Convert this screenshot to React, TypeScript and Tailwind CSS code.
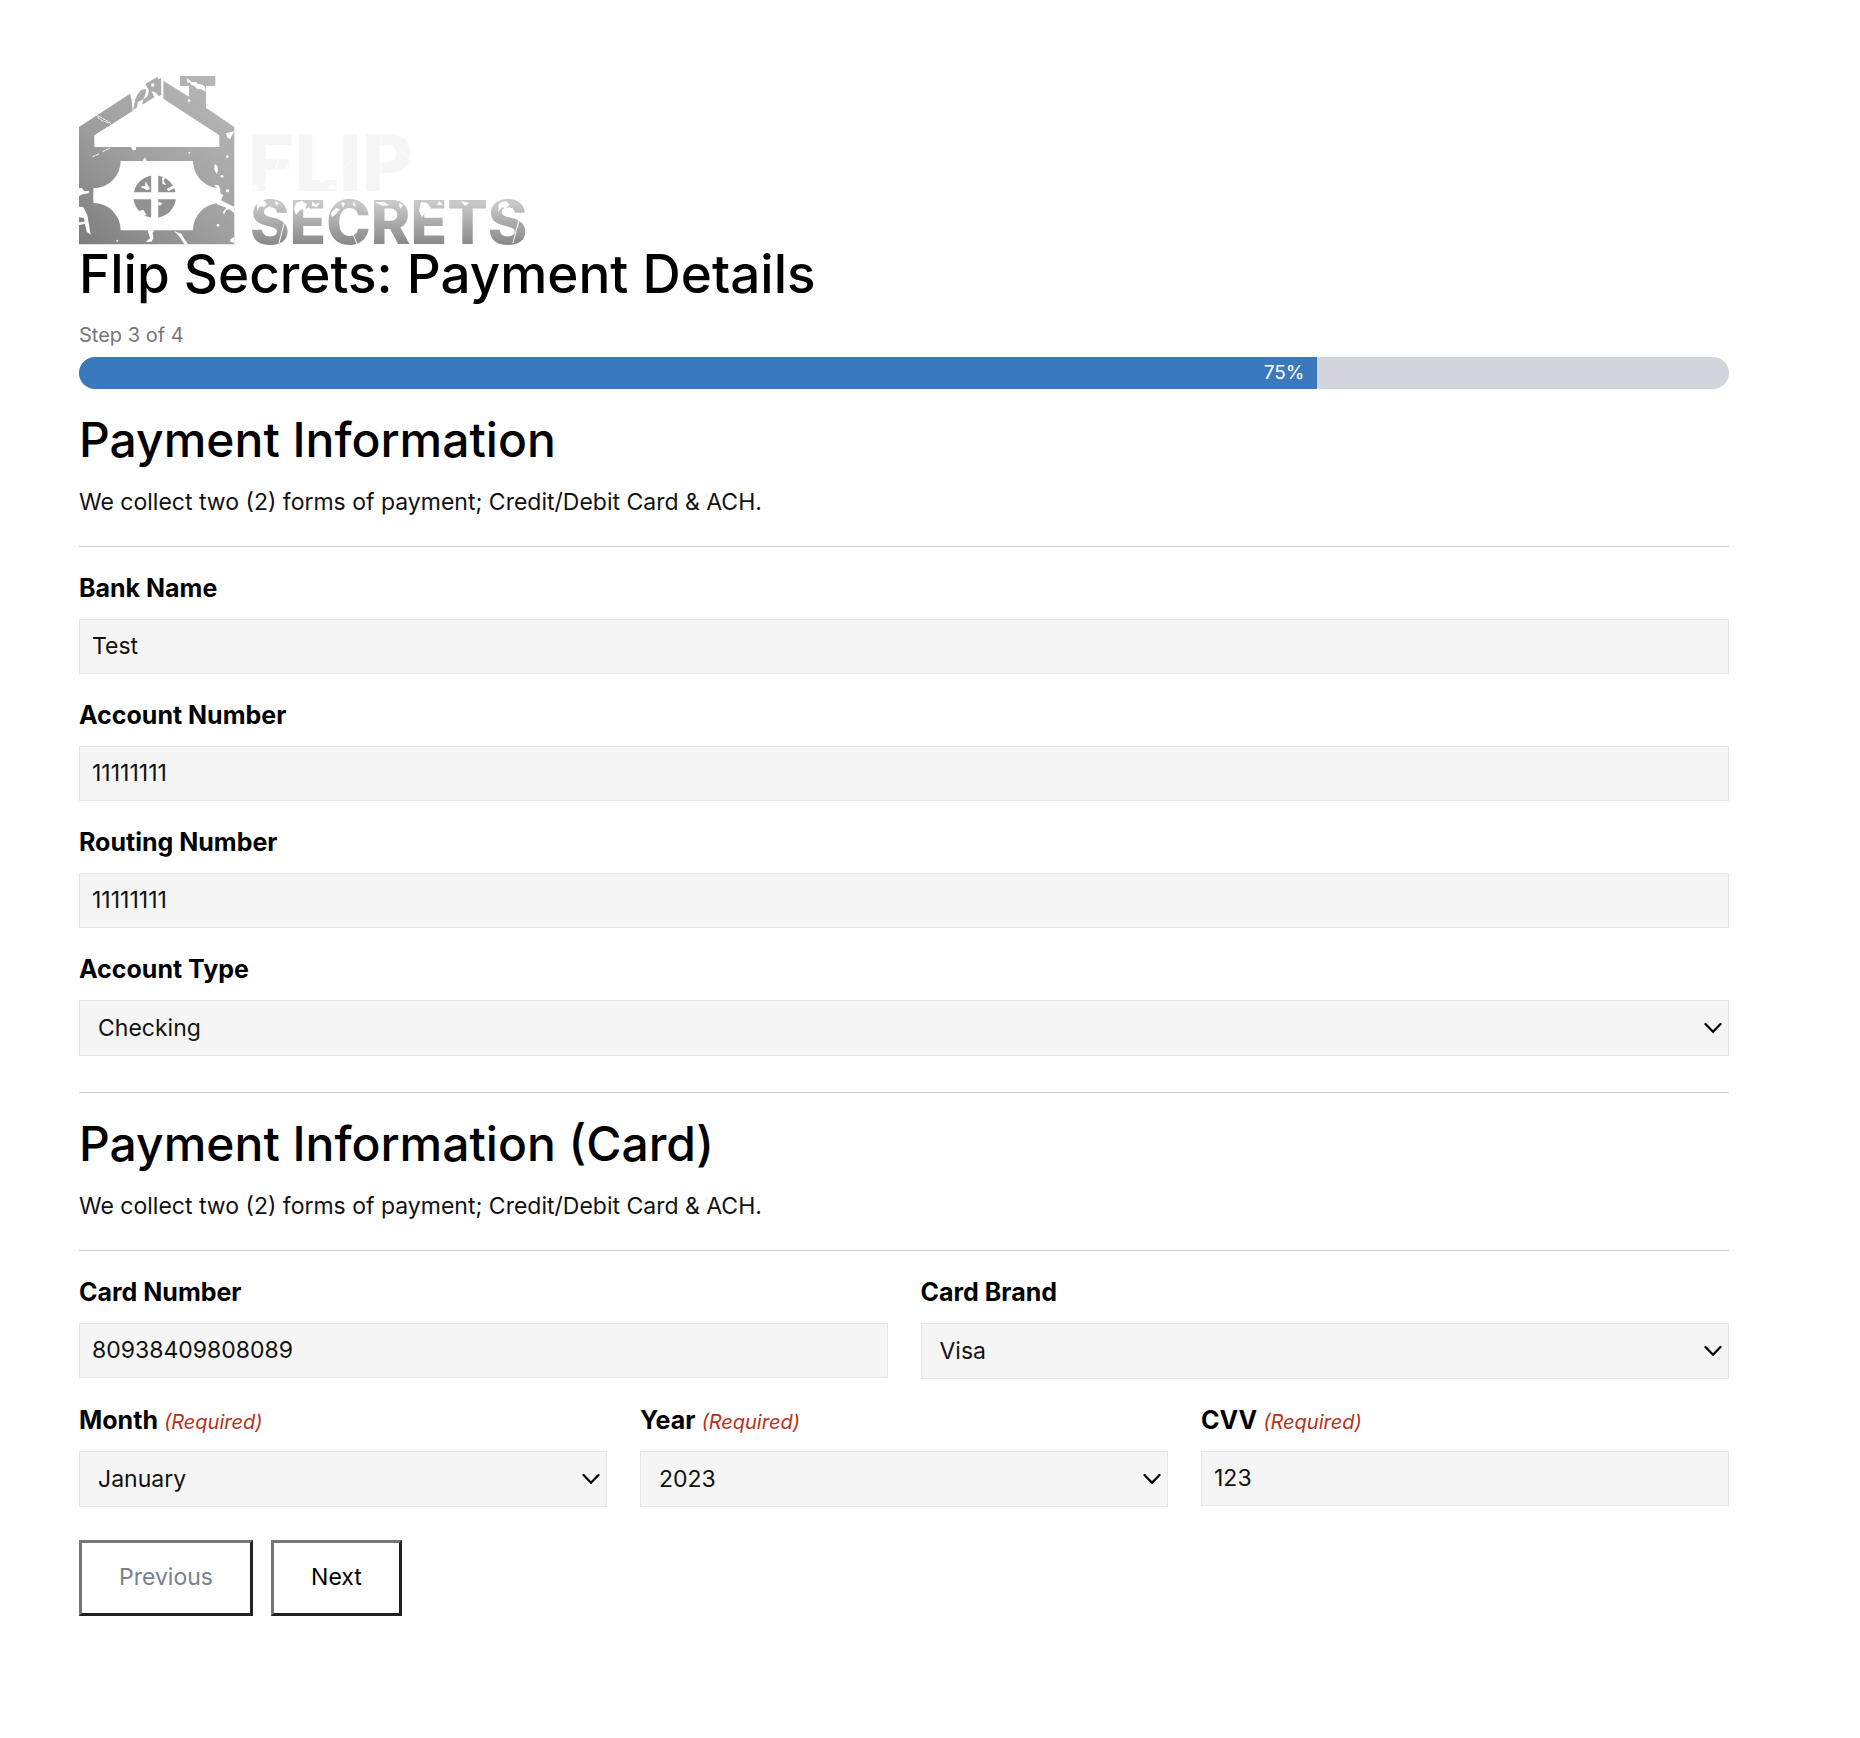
import { useId, type ReactNode } from "react";

function Logo() {
  return (
    <svg viewBox="0 0 456 169" className="block h-[169px] w-[456px] overflow-visible" role="img" aria-label="Flip Secrets">
      <defs>
        <linearGradient id="house" x1="0" y1="1" x2="0.8" y2="0">
          <stop offset="0" stopColor="#7d7d7d" />
          <stop offset="0.5" stopColor="#a0a0a0" />
          <stop offset="1" stopColor="#b6b6b6" />
        </linearGradient>
        <linearGradient id="word" x1="0" y1="0" x2="0" y2="1">
          <stop offset="0.25" stopColor="#c8c8c8" />
          <stop offset="0.8" stopColor="#8a8a8a" />
        </linearGradient>
      </defs>
      <g transform="translate(-19 -16) scale(0.33333)">
        <path
          fill="url(#house)"
          fillRule="evenodd"
          d="M57 201 L210 101 L215 120 L218 153 L103 226 V261 H478 V226 L310 116 V62 L387 110 V78 H360 V48 H466 V78 H438 V143 L523 201 V553 H57Z
             M182 303 A82 82 0 0 1 100 385 V429 A82 82 0 0 1 182 511 H399 A82 82 0 0 1 481 429 V385 A82 82 0 0 1 399 303Z"
        />
        <path
          fill="#acacac"
          d="M232 104L243 90L258 87L257 101L250 118L234 126L230 144L219 150L226 118Z M256 72L293 50L294 58L303 54L304 105L296 108L286 97L275 94L283 112L247 134L249 120L262 109L267 92Z"
        />
        <circle cx="284" cy="410" r="64" fill="#929292" />
        <path d="M284 340V480M215 407.500H355" stroke="#fff" strokeWidth="21" fill="none" />
        <g fill="#fff">
          <path d="M380 55L392 62L395 67L408 65L413 72L428 74L436 82L437 96L424 88L410 86L404 78L394 75L389 67L383 70Z" />
          <path d="M497 220L523 214L510 238L502 232Z" />
          <path d="M57 385L66 384L73 394L87 393L86 400L71 402L57 408Z" />
          <path d="M57 440L70 442L82 465L92 524L80 515L75 492L57 495V487L74 485L72 474L57 472Z" />
          <path d="M263 511H283L278 519L280 536L274 545L257 546L270 535Z" />
          <path d="M342 513L365 522L373 537L385 553H373L360 532Z" />
          <path d="M480 400L490 405L483 421L503 431L523 440V460L508 448L498 450L492 464L489 456L499 443L470 433Z" />
          <path d="M464 312L472 318L474 333L469 342L463 328Z" />
          <path d="M250 299L255 292L260 303H248Z" />
          <path d="M213 260H228V269L218 271Z" />
          <path d="M257 364L270 386L262 391L240 380L255 378Z" />
          <path d="M306 354L317 347L311 364L319 376L308 372Z" />
          <path d="M235 454L250 449L259 464L249 468Z" />
          <path d="M295 425L307 430L300 438L295 434Z" />
          <path d="M320 387L344 374L347 382L326 394Z" />
          <path d="M510 538L523 531V548L511 545Z" />
          <path d="M463 374L476 376L480 386L468 382Z" />
          <circle cx="278" cy="75" r="5" />
          <circle cx="387" cy="122" r="4" />
          <circle cx="388" cy="278" r="3" />
          <circle cx="502" cy="290" r="4" />
          <circle cx="474" cy="496" r="4" />
          <circle cx="486" cy="349" r="4" />
          <circle cx="503" cy="392" r="5" />
          <circle cx="172" cy="542" r="3" />
        </g>
        <path
          d="M108 166L122 171L131 177L142 183L153 191M113 172L128 183L146 188M98 290L119 281M128 275L150 264M480 430L523 452"
          stroke="#fff"
          strokeWidth="3"
          strokeDasharray="9 2"
          fill="none"
        />
      </g>
      <g fontFamily="Inter, sans-serif" fontWeight="800">
        <text x="169" y="115" fontSize="79" fill="#f6f6f6">FLIP</text>
        <text x="171" y="168" fontSize="60" fill="url(#word)">SECRETS</text>
      </g>
      <g fill="#fff">
        <path d="M178 127l6-3 4 4-3 3-4-1-3 5zM186 133l5-3 3 4-5 3zM196 125l4 2-3 3zM217 127l6-2 5 3-2 5-5 1-4 5-2-6zM226 134l4-3 2 6-4 2zM233 125l3 3 5-1-3 4-5-1zM252 137l5-5 4 1-4 5-4 3zM262 126l4 1-2 5zM275 125l2 6-3-2zM296 126h9l5 3-6 1-4-2zM320 127l4 2-3 4zM342 126l6 1 4 5-5 4-4 5-3-6zM352 134l4 2-2 4-4-1zM360 125l4 4h-6zM382 125l8 2-4 3zM398 138l5-1-2 4zM402 148l4 1-3 3zM397 157l3 2-3 2zM420 127l7-2 4 4-5 3-3-1-4 5zM430 133l4-1-1 5z" />
        <path d="M173 111l4-3 3 4-3 4zM185 106l3 3-4 1zM238 102l6-3 3 5-5 3zM249 110l5-2 3 4-5 2zM281 104l5 2-4 5zM312 74l4 3-3 3z" />
      </g>
      <path
        d="M203 70L197 92M211 82L204 107M252 106L272 84M302 62V114M320 73L338 90M200 167L206 144M434 167L440 144M278 168L274 158"
        stroke="#fff"
        strokeWidth="1"
        fill="none"
      />
    </svg>
  );
}

const control =
  "block w-full rounded-none border border-[#e6e6e6] bg-[#f5f5f5] text-[23px] text-[#111] outline-none";

function Label({ id, required, children }: { id: string; required?: boolean; children: ReactNode }) {
  return (
    <label htmlFor={id} className="mb-[13px] flex h-[35px] items-baseline gap-1.5 text-[25px] leading-[35px] font-bold text-black">
      {children}
      {required && <span className="text-[20px] leading-none font-normal text-[#b8301a] italic">(Required)</span>}
    </label>
  );
}

function TextField({ label, value, required }: { label: string; value: string; required?: boolean }) {
  const id = useId();
  return (
    <div>
      <Label id={id} required={required}>{label}</Label>
      <input id={id} type="text" defaultValue={value} className={`${control} h-[55px] px-3 pb-0.5`} />
    </div>
  );
}

function SelectField({ label, value, options, required }: { label: string; value: string; options: string[]; required?: boolean }) {
  const id = useId();
  return (
    <div>
      <Label id={id} required={required}>{label}</Label>
      <div className="relative">
        <select id={id} defaultValue={value} className={`${control} h-14 appearance-none pr-10 pl-[18px]`}>
          {options.map((o) => (
            <option key={o}>{o}</option>
          ))}
        </select>
        <svg
          viewBox="0 0 18 11"
          className="pointer-events-none absolute top-1/2 right-[7px] h-[11px] w-[18px] -translate-y-1/2"
          fill="none"
          stroke="#000"
          strokeWidth="2.300"
          strokeLinecap="round"
          strokeLinejoin="round"
          aria-hidden="true"
        >
          <path d="M1.500 1.500L9 9.300L16.500 1.500" />
        </svg>
      </div>
    </div>
  );
}

function SectionIntro({ title }: { title: string }) {
  return (
    <section className="pt-6">
      <h2 className="text-[48px] leading-[54px] font-medium text-black">{title}</h2>
      <p className="mt-[18px] text-[23px] leading-[34px] text-[#111]">
        We collect two (2) forms of payment; Credit/Debit Card &amp; ACH.
      </p>
      <hr className="mt-[27px] border-[#ccc]" />
    </section>
  );
}

export default function App() {
  return (
    <main className="min-h-screen bg-white pt-[76px] pr-[131px] pb-[122px] pl-[79px] font-['Inter',sans-serif]">
      <Logo />
      <h1 className="text-[53px] leading-[58px] font-medium text-black">Flip Secrets: Payment Details</h1>
      <p className="mt-[18px] text-[20px] leading-[28px] text-[#767676]">Step 3 of 4</p>
      <div
        role="progressbar"
        aria-valuenow={75}
        aria-valuemin={0}
        aria-valuemax={100}
        aria-label="Form progress"
        className="mt-2 h-8 overflow-hidden rounded-full bg-[#d2d6dc]"
      >
        <div className="flex h-full w-3/4 items-center justify-end bg-[#3b79be] pr-3 text-[19px] text-white">75%</div>
      </div>

      <form onSubmit={(e) => e.preventDefault()}>
        <SectionIntro title="Payment Information" />
        <div className="mt-6 flex flex-col gap-6">
          <TextField label="Bank Name" value="Test" />
          <TextField label="Account Number" value="11111111" />
          <TextField label="Routing Number" value="11111111" />
          <SelectField label="Account Type" value="Checking" options={["Checking", "Savings"]} />
        </div>
        <hr className="mt-9 border-[#ccc]" />

        <SectionIntro title="Payment Information (Card)" />
        <div className="mt-6 grid grid-cols-2 gap-x-[33px]">
          <TextField label="Card Number" value="80938409808089" />
          <SelectField label="Card Brand" value="Visa" options={["Visa", "Mastercard", "American Express", "Discover"]} />
        </div>
        <div className="mt-6 grid grid-cols-3 gap-x-[33px]">
          <SelectField label="Month" value="January" options={["January", "February", "March", "April"]} required />
          <SelectField label="Year" value="2023" options={["2023", "2024", "2025", "2026"]} required />
          <TextField label="CVV" value="123" required />
        </div>

        <div className="mt-[33px] flex gap-[18px]">
          <button type="button" className="h-[76px] w-[174px] border-3 border-t-[#767676] border-r-[#212121] border-b-[#212121] border-l-[#767676] bg-white pb-0.5 text-[23px] text-[#7b808c]">
            Previous
          </button>
          <button type="submit" className="h-[76px] w-[131px] border-3 border-t-[#767676] border-r-[#212121] border-b-[#212121] border-l-[#767676] bg-white pb-0.5 text-[23px] text-black">
            Next
          </button>
        </div>
      </form>
    </main>
  );
}
